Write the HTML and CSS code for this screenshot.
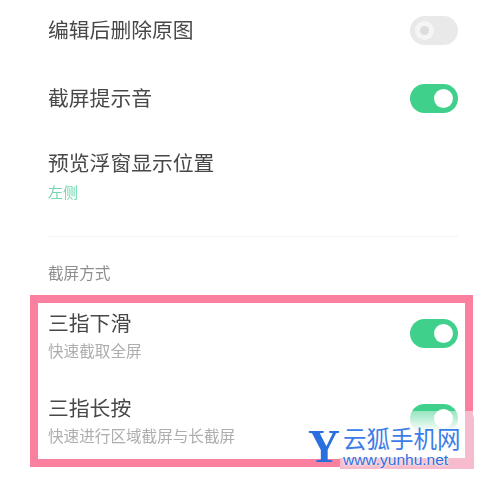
FILE: index.html
```html
<!DOCTYPE html>
<html lang="zh-CN">
<head>
    <meta charset="UTF-8">
    <meta name="viewport" content="width=device-width, initial-scale=1.0">
    <title>截屏设置</title>
    <link rel="stylesheet" href="styles.css">
</head>
<body>
    <div class="screen">
        <div class="row row-first">
            <span class="title">编辑后删除原图</span>
            <span class="toggle off"></span>
        </div>
        <div class="row row-second">
            <span class="title">截屏提示音</span>
            <span class="toggle"></span>
        </div>
        <div class="row-text row-position">
            <div class="title">预览浮窗显示位置</div>
            <div class="value">左侧</div>
        </div>
        <div class="divider"></div>
        <div class="section-label">截屏方式</div>

        <div class="highlight">
            <div class="row row-swipe">
                <div class="row-text">
                    <div class="title">三指下滑</div>
                    <div class="sub">快速截取全屏</div>
                </div>
                <span class="toggle"></span>
            </div>
            <div class="row row-press">
                <div class="row-text">
                    <div class="title">三指长按</div>
                    <div class="sub">快速进行区域截屏与长截屏</div>
                </div>
                <span class="toggle"></span>
            </div>
        </div>
    </div>

    <div class="watermark">
        <span class="wm-tint-right"></span>
        <span class="wm-tint-bottom"></span>
        <span class="wm-y">Y</span>
        <div class="wm-text">
            <div class="wm-name">云狐手机网</div>
            <div class="wm-url">www.yunhu.net</div>
        </div>
    </div>
</body>
</html>
```

FILE: styles.css
```css
* {
    box-sizing: border-box;
}
body {
    margin: 0;
    background: #fff;
    font-family: "Noto Sans CJK SC", "Liberation Sans", sans-serif;
    width: 484px;
    height: 486px;
    overflow: hidden;
    position: relative;
}
.screen {
    padding: 16px 26px 0 48px;
    filter: blur(0.5px);
}
.row {
    display: flex;
    justify-content: space-between;
    align-items: center;
}
.title {
    font-size: 20.8px;
    line-height: 30px;
    color: #484848;
}
.row-first .title,
.row-second .title {
    margin-bottom: 3px;
}
.value {
    font-size: 15px;
    line-height: 20px;
    margin-top: 5px;
    color: #72d8b0;
}
.sub {
    font-size: 15.6px;
    line-height: 20px;
    margin-top: 3px;
    color: #aeaeae;
}
.row-first {
    height: 29px;
}
.row-second {
    height: 29px;
    margin-top: 39px;
}
.row-position {
    margin-top: 34px;
}
.divider {
    height: 1px;
    background: #f3f3f3;
    margin-top: 34px;
}
.section-label {
    font-size: 15.6px;
    line-height: 20px;
    margin-top: 25px;
    color: #8e8e8e;
}
.highlight {
    margin: 13px -15px 0 -18px;
    height: 172px;
    border: 8px solid #fb80a0;
    padding: 4px 7px 0 10px;
}
.row-press {
    margin-top: 32px;
}
.toggle {
    flex: none;
    position: relative;
    width: 48px;
    height: 29px;
    border-radius: 15px;
    background: #3fd08c;
}
.toggle::after {
    content: "";
    position: absolute;
    top: 5px;
    right: 5px;
    width: 19px;
    height: 19px;
    border-radius: 50%;
    background: #fff;
}
.toggle.off {
    background: #e9e9e9;
}
.toggle.off::after {
    right: auto;
    background: #dcdcdc;
    width: 9px;
    height: 9px;
    top: 10px;
    left: 10px;
    box-shadow: 0 0 0 5px #f5f5f5;
}
.watermark {
    position: absolute;
    left: 300px;
    top: 411px;
    width: 174px;
    height: 47px;
    background: linear-gradient(rgba(255, 255, 255, 0.45), rgba(255, 255, 255, 0.95) 40%);
    display: flex;
    align-items: flex-start;
    padding: 7px 0 0 8px;
}
.wm-tint-right {
    position: absolute;
    left: 165px;
    top: 0;
    bottom: -11px;
    right: 0;
    background: #f6bccd;
    border-radius: 0 8px 0 0;
}
.wm-tint-bottom {
    position: absolute;
    left: 40px;
    right: 0;
    top: 47px;
    height: 11px;
    background: #f6bccd;
}
.wm-y {
    position: relative;
    font-family: "Liberation Serif", serif;
    font-weight: bold;
    font-size: 47px;
    line-height: 44px;
    margin-top: 6px;
    width: 36px;
    color: #2a6fe0;
    transform: scaleX(0.94);
    transform-origin: left center;
}
.wm-text {
    position: relative;
    margin-left: -1px;
    margin-top: 6px;
}
.wm-name {
    font-size: 23.5px;
    line-height: 28px;
    color: #3b7de8;
    text-shadow: 0 0 2px #fff;
}
.wm-url {
    font-family: "Liberation Sans", sans-serif;
    font-size: 15.5px;
    line-height: 15px;
    color: #2a6fe0;
    text-shadow: 0 0 2px #fff, 0 0 3px #fff;
}
```
